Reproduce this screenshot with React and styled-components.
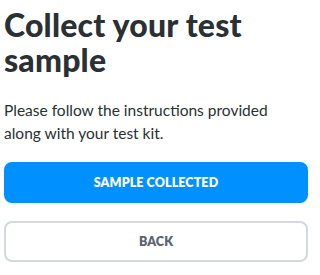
import React from 'react';
import styled, { createGlobalStyle } from 'styled-components';

const GlobalStyle = createGlobalStyle`
  body {
    margin: 0;
    background: #ffffff;
    font-family: Lato, "Open Sans", sans-serif;
  }
`;

const Page = styled('div')`
  width: 304px;
  padding: 7px 10px 0 4px;
  display: flex;
  flex-direction: column;
`;

const Title = styled('h1')`
  margin: 0;
  font-size: 32px;
  line-height: 35px;
  font-weight: 900;
  color: #2a3033;
  letter-spacing: 0.2px;
`;

const Text = styled('p')`
  margin: 22px 0 0;
  max-width: 280px;
  font-size: 15.5px;
  line-height: 23px;
  color: #2a3033;
`;

const Actions = styled('div')`
  display: flex;
  flex-direction: column;
  gap: 18px;
  margin-top: 17px;
`;

const Button = styled('button')`
  height: 41px;
  width: 100%;
  border-radius: 8px;
  border: ${props => props.primary ? 'none' : '2px solid #d4d8e0'};
  background-color: ${props => props.primary ? '#0090ff' : '#ffffff'};
  color: ${props => props.primary ? '#ffffff' : '#5a6370'};
  font-family: Lato, sans-serif;
  font-size: 12.5px;
  font-weight: 800;
  letter-spacing: 0.1px;
  text-transform: uppercase;
  cursor: pointer;
  outline: unset;
`;

const App = () => {
    return (
        <Page>
            <GlobalStyle />
            <Title>Collect your test sample</Title>
            <Text>Please follow the instructions provided along with your test kit.</Text>
            <Actions>
                <Button primary>Sample collected</Button>
                <Button>Back</Button>
            </Actions>
        </Page>
    );
};

export default App;
